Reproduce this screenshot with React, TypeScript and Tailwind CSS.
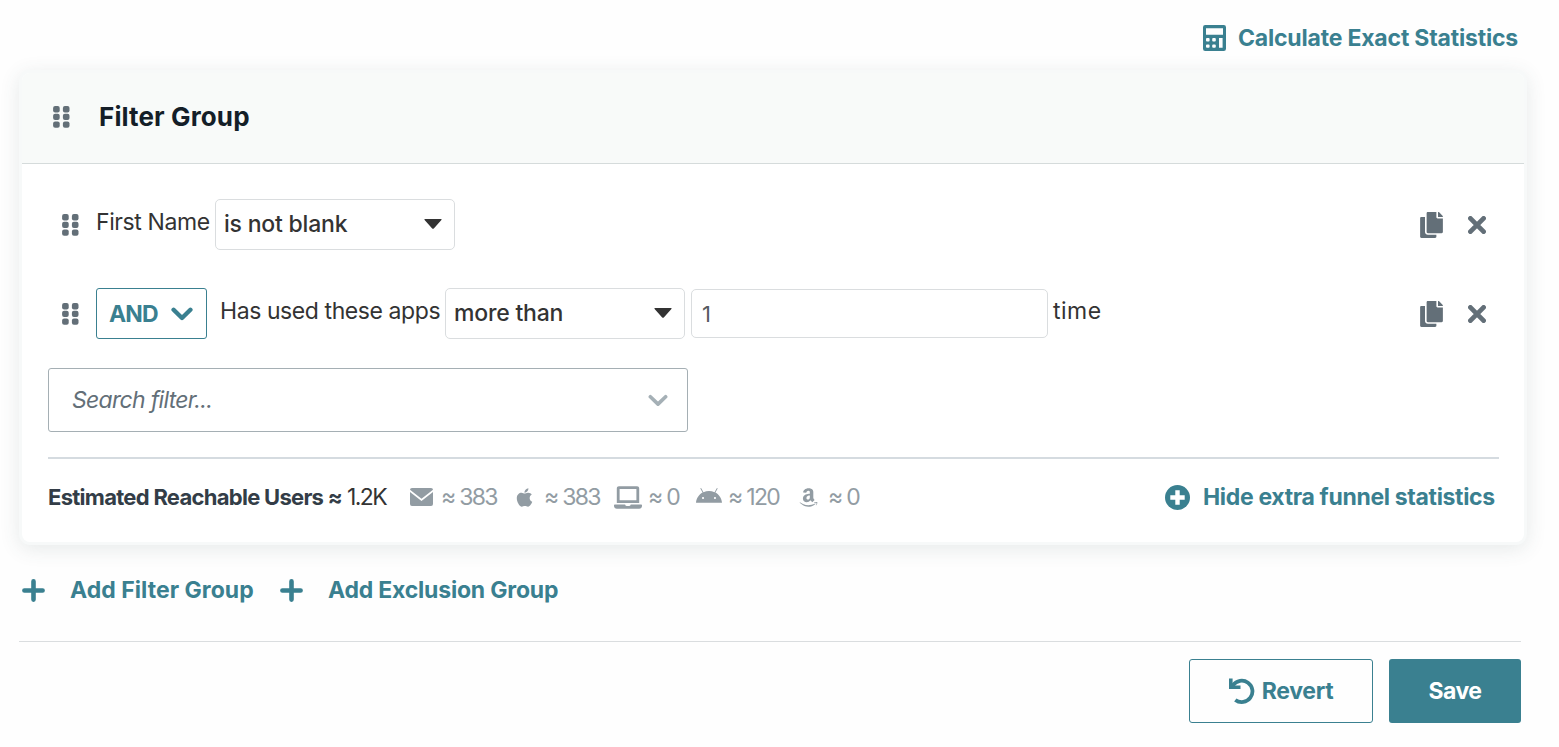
import { FaAmazon, FaApple, FaCopy, FaLaptop } from "react-icons/fa";
import { FaAndroid } from "react-icons/fa6";

function DragHandle() {
  return (
    <svg className="block h-[22px] w-[17px] shrink-0 fill-[#636f78]" viewBox="0 0 17 22">
      {[0, 7.7, 15.4].map((y) =>
        [0.1, 9.9].map((x) => <rect key={`${x}-${y}`} x={x} y={y} width="6.6" height="6.4" rx="2" />)
      )}
    </svg>
  );
}

function CalculatorIcon() {
  return (
    <svg className="block h-[26px] w-[23px] shrink-0" viewBox="0 0 23 26">
      <path
        fill="#3a8090"
        fillRule="evenodd"
        d="M2.2 0H20.8Q23 0 23 2.2V23.8Q23 26 20.8 26H2.2Q0 26 0 23.8V2.2Q0 0 2.2 0ZM3 3.2V9.8H20V3.2ZM4 13Q3 13 3 14V15.4Q3 16.4 4 16.4H5.6Q6.6 16.4 6.6 15.4V14Q6.6 13 5.6 13ZM10.2 13Q9.2 13 9.2 14V15.4Q9.2 16.4 10.2 16.4H11.8Q12.8 16.4 12.8 15.4V14Q12.8 13 11.8 13ZM4 19.4Q3 19.4 3 20.4V21.8Q3 22.8 4 22.8H5.6Q6.6 22.8 6.6 21.8V20.4Q6.6 19.4 5.6 19.4ZM10.2 19.4Q9.2 19.4 9.2 20.4V21.8Q9.2 22.8 10.2 22.8H11.8Q12.8 22.8 12.8 21.8V20.4Q12.8 19.4 11.8 19.4ZM16 13V22.8H19.6V13Z"
      />
    </svg>
  );
}

function Chevron({ className }: { className: string }) {
  return (
    <svg className={className} viewBox="0 0 22 14" fill="none" stroke="currentColor" strokeLinecap="round" strokeLinejoin="round">
      <path d="M2.6 2.8L11 11L19.4 2.8" />
    </svg>
  );
}

function RowActions() {
  return (
    <div className="ml-auto flex items-center text-[#636f78]">
      <FaCopy className="block h-[26px] w-[23px]" />
      <svg className="ml-[25px] block size-[18px]" viewBox="0 0 18 18" stroke="currentColor" strokeWidth="4.8" strokeLinecap="round">
        <path d="M2.4 2.4L15.6 15.6M15.6 2.4L2.4 15.6" />
      </svg>
    </div>
  );
}

function SelectBox({ label }: { label: string }) {
  return (
    <button className="flex h-[51px] w-[240px] items-center justify-between rounded-[5px] border border-[#dadddf] pr-[12px] pb-px pl-[8px] text-[23px] font-medium text-[#333]">
      <span className="tracking-[-0.2px]">{label}</span>
      <svg className="block h-[10px] w-[18px] fill-[#333]" viewBox="0 0 18 10">
        <path d="M1 0H17Q18 0 17.4 .9L9.8 9.4Q9 10.3 8.2 9.4L.6 .9Q0 0 1 0Z" />
      </svg>
    </button>
  );
}

function PlusIcon() {
  return (
    <svg className="block size-[23px] shrink-0" viewBox="0 0 23 23" stroke="#3a8090" strokeWidth="4.6" strokeLinecap="round">
      <path d="M11.5 2.4V20.6M2.4 11.5H20.6" />
    </svg>
  );
}

export default function App() {
  return (
    <div className="h-[747px] w-[1559px] overflow-hidden bg-[#fefefe] font-['Inter','Liberation_Sans',sans-serif] text-[23px] leading-[30px] whitespace-nowrap text-[#333]">
      <div className="flex h-[73px] items-center justify-end pt-[3px] pr-[40px]">
        <button className="flex items-center gap-[12px] font-bold text-[#3a8090]">
          <CalculatorIcon />
          <span className="w-[281px] text-left tracking-[-0.19px]">Calculate Exact Statistics</span>
        </button>
      </div>

      <section className="ml-[22px] h-[469px] w-[1502px] rounded-lg bg-white shadow-[0_0_0_3px_#f7f9f9,0_4px_20px_3px_rgba(60,80,80,0.12)]">
        <header className="flex h-[91px] items-center rounded-t-lg border-b border-[#d5dbdb] bg-[#f8faf9] pb-[2px] pl-[31px]">
          <DragHandle />
          <h2 className="ml-[29px] text-[26px] font-bold tracking-[0.12px] text-[#141e28]">Filter Group</h2>
        </header>

        <div className="pt-[35px] pr-[25px] pl-[26px]">
          <div className="flex h-[51px] items-center pr-[13px] pl-[14px]">
            <DragHandle />
            <span className="ml-[17px] w-[119px] pb-[5px] tracking-[-0.4px]">First Name</span>
            <SelectBox label="is not blank" />
            <RowActions />
          </div>

          <div className="mt-[38px] flex h-[51px] items-center pr-[13px] pl-[14px]">
            <DragHandle />
            <button className="ml-[17px] flex h-[51px] w-[111px] items-center justify-between rounded-[3px] border border-[#3a8090] pr-[13px] pl-[12px] font-bold text-[#3a8090]">
              <span className="tracking-[-0.9px]">AND</span>
              <Chevron className="block h-[14px] w-[22px] stroke-[4.4]" />
            </button>
            <span className="ml-[13px] w-[225px] pb-[5px] tracking-[-0.42px]">Has used these apps</span>
            <SelectBox label="more than" />
            <div className="ml-[6px] flex h-[49px] w-[357px] items-center rounded-[5px] border border-[#dadddf] pl-[10px] text-[22px] text-[#555b60]">1</div>
            <span className="ml-[5px] pb-[5px] tracking-[0.5px]">time</span>
            <RowActions />
          </div>

          <div className="mt-[29px] flex h-16 w-[640px] items-center justify-between rounded-[3px] border border-[#a5afb4] pr-[19px] pl-[23px]">
            <span className="tracking-[-0.7px] text-[#636f78] italic">Search filter...</span>
            <Chevron className="block h-[13px] w-[20px] stroke-[4] text-[#a5b0b6]" />
          </div>

          <div className="mt-[25px] h-[2px] bg-[#d5dbe0]" />

          <div className="flex h-[76px] items-center pr-1">
            <span className="w-[299px] text-[22px] font-bold tracking-[-0.72px] text-[#333d47]">Estimated Reachable Users ≈</span>
            <span className="w-[63px] tracking-[-1.6px]">1.2K</span>
            <div className="flex items-center tracking-[-1.7px] text-[#929ca3]">
              <svg className="block h-[18px] w-[23px]" viewBox="0 0 23 18" fill="currentColor">
                <path d="M2 0H21Q23 0 23 1.8L11.5 10.8L0 1.8Q0 0 2 0ZM0 4.1L11.5 13L23 4.1V16Q23 18 21 18H2Q0 18 0 16Z" />
              </svg>
              <span className="ml-[8px] w-[73px]">≈ 383</span>
              <FaApple className="block size-[21px]" />
              <span className="ml-[9px] w-[70px]">≈ 383</span>
              <FaLaptop className="block h-[23px] w-[28px]" />
              <span className="ml-[6px] w-[48px]">≈ 0</span>
              <FaAndroid className="block size-[26px]" />
              <span className="ml-[6px] w-[70px]">≈ 120</span>
              <FaAmazon className="block size-[21px]" />
              <span className="ml-[9px]">≈ 0</span>
            </div>
            <button className="ml-auto flex items-center font-bold text-[#3a8090]">
              <svg className="block size-[25px]" viewBox="0 0 25 25">
                <circle cx="12.5" cy="12.5" r="12.5" fill="#3a8090" />
                <path d="M12.5 5.3V19.7M5.3 12.5H19.7" stroke="#fff" strokeWidth="4.4" />
              </svg>
              <span className="ml-[13px] w-[292px] text-left tracking-[-0.33px]">Hide extra funnel statistics</span>
            </button>
          </div>
        </div>
      </section>

      <div className="flex h-[99px] items-center pb-[3px] pl-[22px] font-bold text-[#3a8090]">
        <button className="flex items-center">
          <PlusIcon />
          <span className="ml-[25px] w-[210px] text-left tracking-[0.04px]">Add Filter Group</span>
        </button>
        <button className="flex items-center">
          <PlusIcon />
          <span className="ml-[25px] tracking-[-0.2px]">Add Exclusion Group</span>
        </button>
      </div>

      <footer className="mr-[38px] ml-[19px] flex justify-end gap-4 border-t border-[#dadddf] pt-[17px] font-bold">
        <button className="flex h-16 w-[184px] items-center justify-center gap-[7px] rounded-[3px] border border-[#3a8090] text-[#3a8090]">
          <svg className="block h-[26px] w-[26px]" viewBox="0 0 26 26" fill="none" stroke="currentColor">
            <path d="M0 .5H3.6V5.4L6 7.4H11.5V11H0Z" fill="currentColor" stroke="none" />
            <path d="M4 7.2A10.7 10.7 0 1 1 6.3 21.9" strokeWidth="3.8" />
          </svg>
          <span className="tracking-[-0.3px]">Revert</span>
        </button>
        <button className="h-16 w-[132px] rounded-[3px] bg-[#3a8090] tracking-[-0.5px] text-white">Save</button>
      </footer>
    </div>
  );
}
